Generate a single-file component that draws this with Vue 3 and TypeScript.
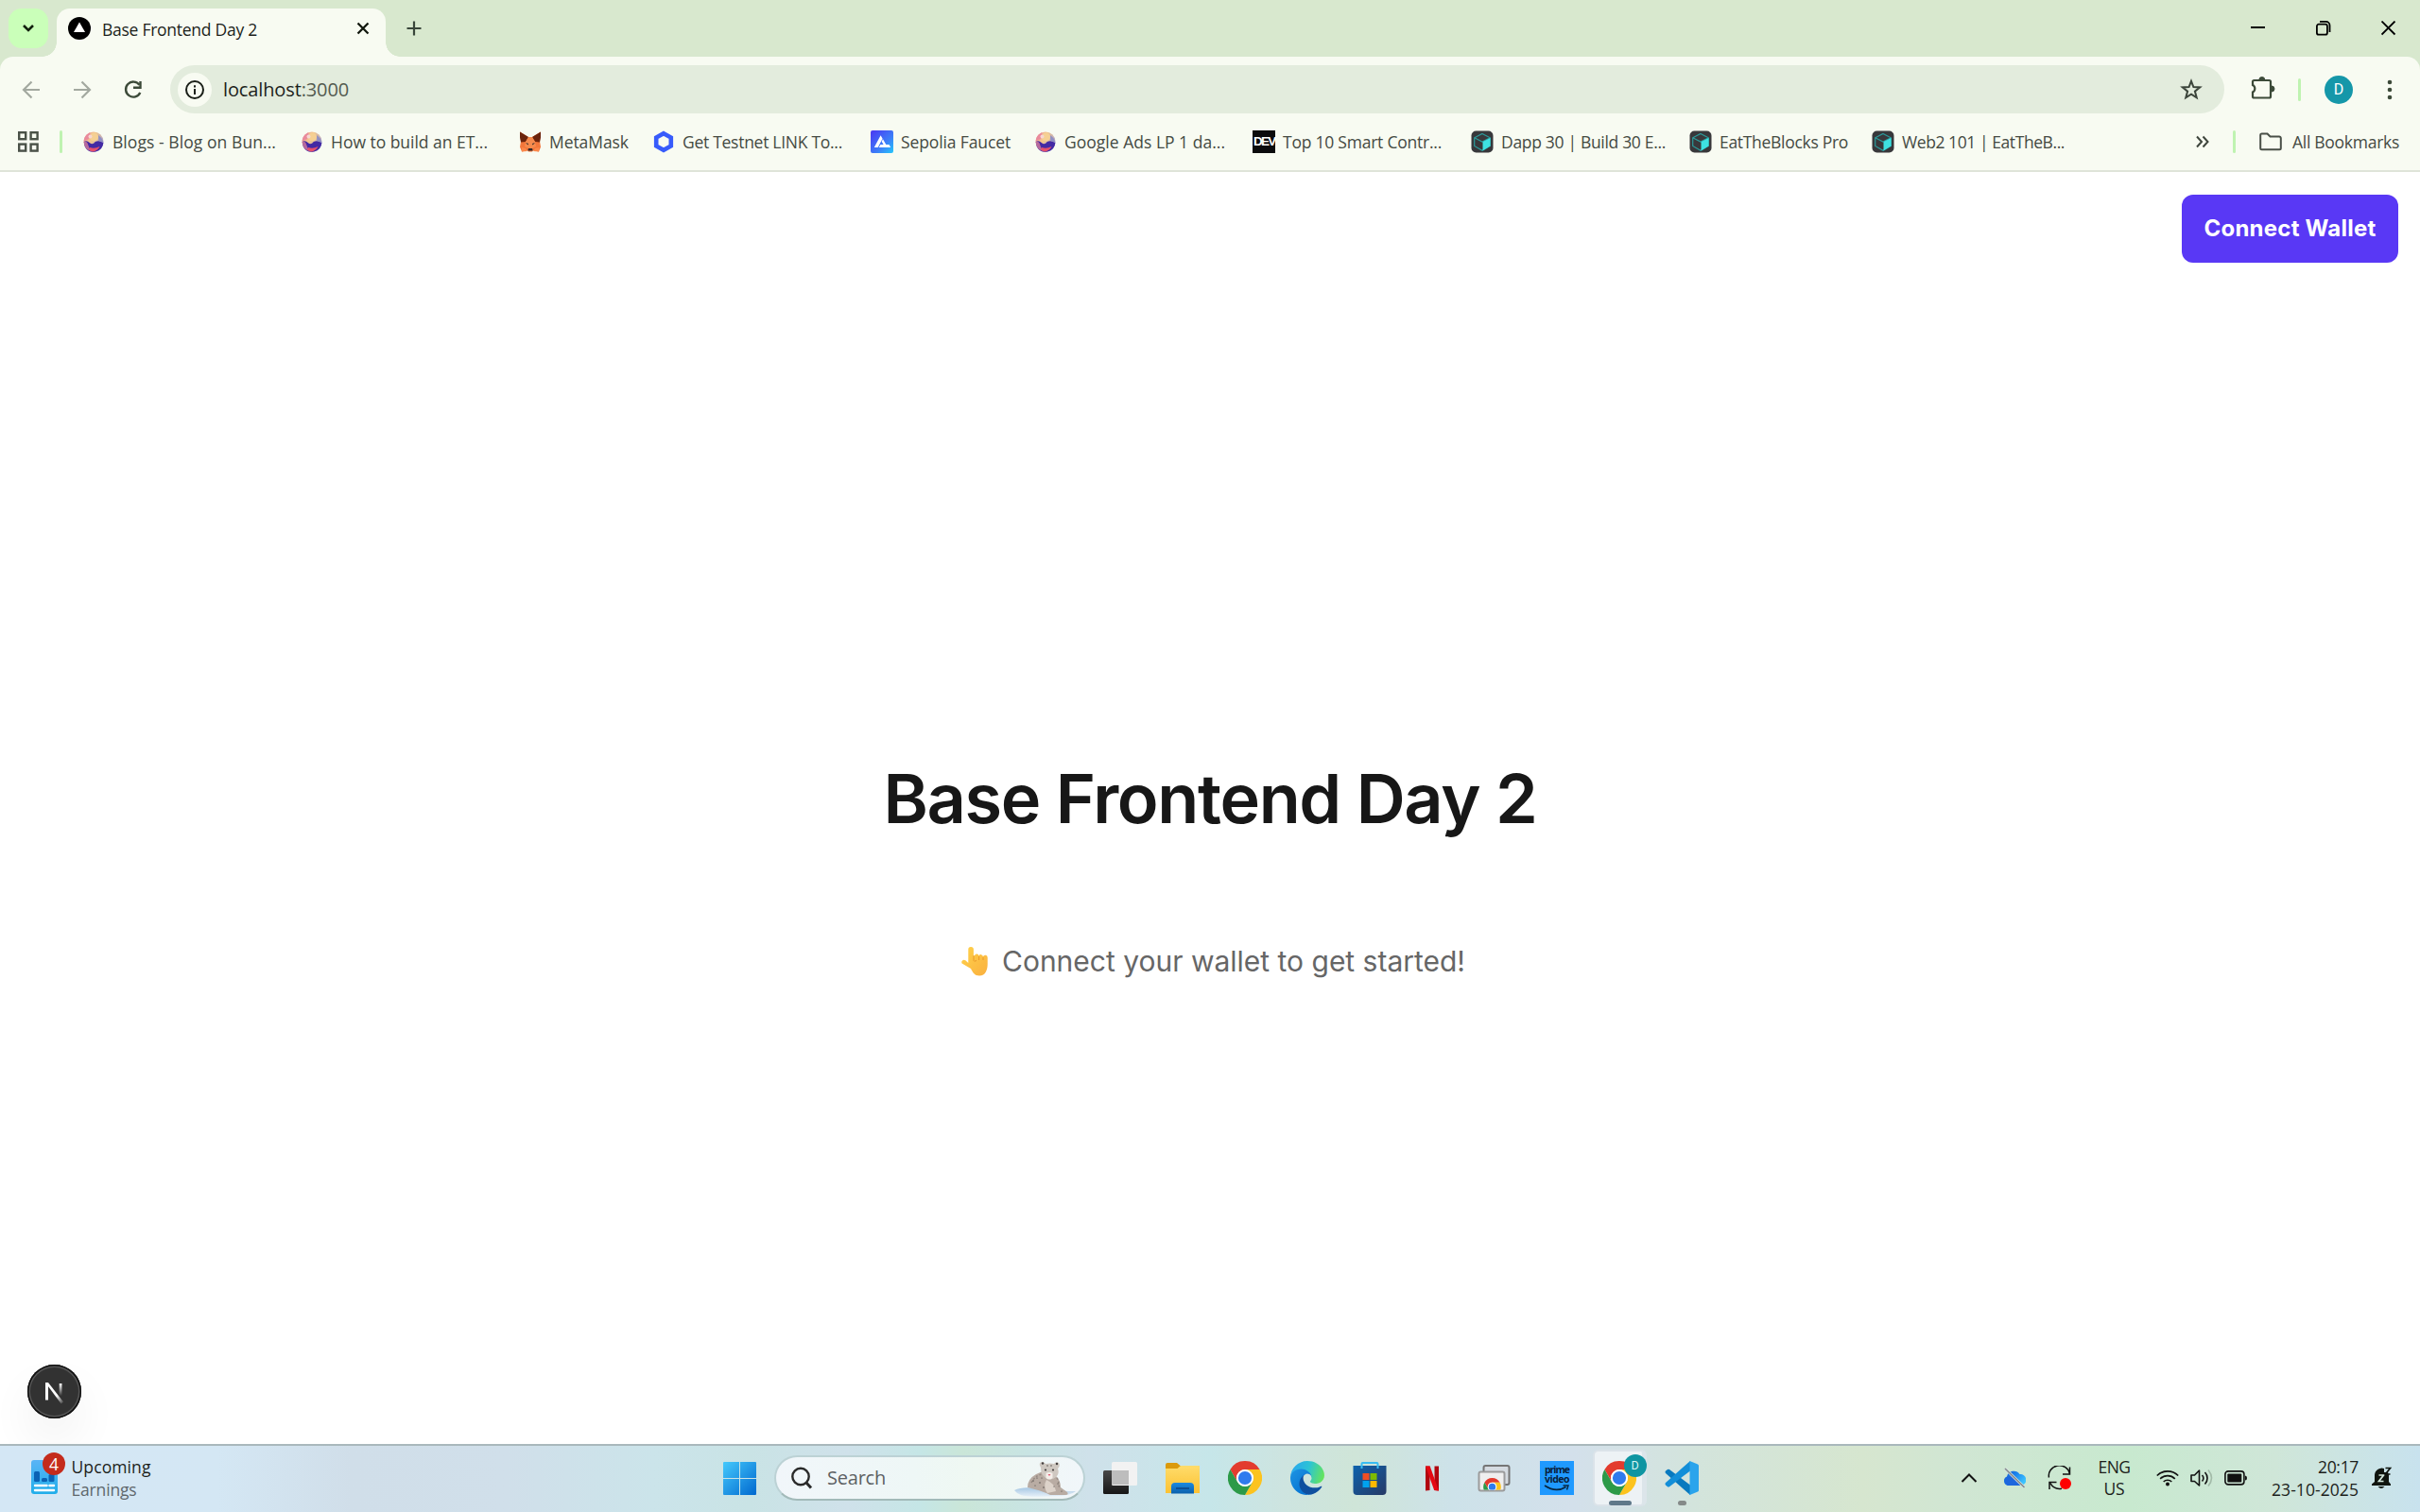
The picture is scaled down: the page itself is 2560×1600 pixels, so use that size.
<script setup lang="ts">
interface Bookmark {
  icon: string
  label: string
  width: number
}

const bookmarks: Bookmark[] = [
  { icon: 'orb', label: 'Blogs - Blog on Bun...', width: 173 },
  { icon: 'orb', label: 'How to build an ET...', width: 166 },
  { icon: 'fox', label: 'MetaMask', width: 84 },
  { icon: 'link', label: 'Get Testnet LINK To...', width: 169 },
  { icon: 'alchemy', label: 'Sepolia Faucet', width: 116 },
  { icon: 'orb', label: 'Google Ads LP 1 da...', width: 170 },
  { icon: 'dev', label: 'Top 10 Smart Contr...', width: 168 },
  { icon: 'block', label: 'Dapp 30 | Build 30 E...', width: 174 },
  { icon: 'block', label: 'EatTheBlocks Pro', width: 136 },
  { icon: 'block', label: 'Web2 101 | EatTheB...', width: 172 },
]

// Spreads or tightens the letters of a label so that it fills the given width.
const vFit = {
  mounted(el: HTMLElement, binding: { value: number }) {
    const natural = el.getBoundingClientRect().width
    const count = (el.textContent ?? '').length
    el.style.letterSpacing = `${(binding.value - natural) / count}px`
  },
}
</script>

<template>
  <div class="screen">
    <svg class="defs" width="0" height="0">
      <defs>
        <linearGradient id="orbTop" x1="0" y1="0" x2="1" y2="0.6"><stop offset="0" stop-color="#ee8fa0" /><stop offset="0.45" stop-color="#f3c78c" /><stop offset="1" stop-color="#a9a0cf" /></linearGradient>
        <linearGradient id="alch" x1="0" y1="0" x2="1" y2="1"><stop offset="0" stop-color="#4a36f2" /><stop offset="0.6" stop-color="#3d7df8" /><stop offset="1" stop-color="#25c8fb" /></linearGradient>
        <linearGradient id="win" x1="0" y1="0" x2="1" y2="1"><stop offset="0" stop-color="#45c9fc" /><stop offset="1" stop-color="#0068cf" /></linearGradient>
        <linearGradient id="edgeBlue" x1="0" y1="0.3" x2="0.6" y2="1"><stop offset="0" stop-color="#1a8fe0" /><stop offset="1" stop-color="#0572d2" /></linearGradient>
        <linearGradient id="edgeGreen" x1="0" y1="0.4" x2="1" y2="0.6"><stop offset="0" stop-color="#2aa7ee" /><stop offset="0.5" stop-color="#2cc3d5" /><stop offset="1" stop-color="#66e55a" /></linearGradient>
        <linearGradient id="folder" x1="0" y1="0" x2="0" y2="1"><stop offset="0" stop-color="#ffdc6b" /><stop offset="1" stop-color="#fcc233" /></linearGradient>
        <linearGradient id="folderTray" x1="0" y1="0" x2="0" y2="1"><stop offset="0" stop-color="#1c8ae0" /><stop offset="1" stop-color="#0b60ac" /></linearGradient>
        <linearGradient id="bag" x1="0" y1="0" x2="1" y2="1"><stop offset="0" stop-color="#0d62ad" /><stop offset="1" stop-color="#273a66" /></linearGradient>
        <linearGradient id="report" x1="0" y1="0" x2="0" y2="1"><stop offset="0" stop-color="#5ab4f6" /><stop offset="1" stop-color="#20aeea" /></linearGradient>
        <linearGradient id="hand" x1="0" y1="0" x2="1" y2="1"><stop offset="0" stop-color="#ffd24a" /><stop offset="1" stop-color="#fab03f" /></linearGradient>
        <linearGradient id="viewDark" x1="0" y1="0" x2="0" y2="1"><stop offset="0" stop-color="#484848" /><stop offset="1" stop-color="#161616" /></linearGradient>
        <linearGradient id="nFade" x1="0" y1="0" x2="0" y2="1"><stop offset="0" stop-color="#fff" /><stop offset="1" stop-color="#fff" stop-opacity="0" /></linearGradient>
        <linearGradient id="nDiag" gradientUnits="userSpaceOnUse" x1="19" y1="20" x2="38" y2="42"><stop offset="0.6" stop-color="#fff" /><stop offset="1" stop-color="#fff" stop-opacity="0" /></linearGradient>
        <linearGradient id="cloud" x1="0" y1="0" x2="1" y2="0.6"><stop offset="0" stop-color="#1555c9" /><stop offset="0.5" stop-color="#1b85ee" /><stop offset="1" stop-color="#3ec5ff" /></linearGradient>
        <linearGradient id="ice" x1="0" y1="0" x2="0" y2="1"><stop offset="0" stop-color="#a7c8e4" /><stop offset="1" stop-color="#e6f0f8" /></linearGradient>
      </defs>
      <symbol id="orb" viewBox="0 0 24 24">
        <circle cx="12" cy="12" r="10.500" fill="url(#orbTop)" />
        <circle cx="12.500" cy="7" r="4.500" fill="#f5d093" />
        <path d="M8 2.300q-6 3-6.400 9l5-2 2-4z" fill="#e98a9c" />
        <circle cx="8.500" cy="6.500" r="2" fill="#f6d7d2" />
        <path d="M1.800 12q3-2 6 1t6-1q4-2 8.600 1a10.500 10.500 0 0 1-19.500 4.500z" fill="#432aa4" />
        <path d="M1.600 12q3.500-1 4.500 3t4 7q-6-1-7.800-6.500z" fill="#b76a9d" />
        <path d="M8 18q5 2 10.500-1-2 4.500-7 5.400-3-.5-4.500-2z" fill="#e4506c" />
        <path d="M17 5q4.500 3 5.300 8l-5-2z" fill="#8f8fc4" />
      </symbol>
      <symbol id="fox" viewBox="0 0 24 24">
        <path d="M1 1.500 10 7h4l9-5.500-1 10 1 6-2 5-6-1.500-1 1.500h-4L9 21l-6 1.500-2-5 1-6z" fill="#f2763a" />
        <path d="M1 1.500 10 7 7 12l-5 .5-1-5zM23 1.500 14 7l3 5 5 .5 1-5z" fill="#6b240d" />
        <path d="m7 12 3-5h4l3 5 1 5-4 2h-4l-4-2z" fill="#f58a4d" />
        <path d="m7 13 3 1-.5 1.500zM17 13l-3 1 .5 1.500zM10 19h4l.7 2.500H9.300z" fill="#31282a" />
        <path d="m3 18 4 1 2 3-6 .5zM21 18l-4 1-2 3 6 .5z" fill="#fb884a" />
      </symbol>
      <symbol id="link" viewBox="0 0 24 24"><path d="m12 3.200 7.800 4.400v8.800L12 20.800l-7.800-4.400V7.600z" fill="none" stroke="#375bfb" stroke-width="4.600" /></symbol>
      <symbol id="alchemy" viewBox="0 0 24 24">
        <rect width="24" height="24" rx="2" fill="url(#alch)" />
        <path d="m10.600 5.300 2 3.500L7.700 18H3.800zM13 9.300l3.300 5.700h3.200l1.700 3H8.700l1.700-3h3.200l-1.900-3.200z" fill="#fff" />
      </symbol>
      <symbol id="block" viewBox="0 0 24 24">
        <rect x="0.500" y="0.500" width="23" height="23" rx="5" fill="#38383b" />
        <path d="m12 3.500 8.300 4.300v8.700L12 21.300l-8.300-4.800V7.800zM3.700 7.800 12 12l8.300-4.200" fill="none" stroke="#2b9c9c" stroke-width="1.200" />
        <path d="m12.500 12 8-4v8.500l-8 5z" fill="#3ee2e2" />
      </symbol>
      <symbol id="chrome" viewBox="0 0 36 36">
        <path d="M33.590 9A18 18 0 0 0 2.410 9L10.210 22.500A9 9 0 0 1 18 9Z" fill="#e33b2e" />
        <path d="M33.590 9A18 18 0 0 0 2.410 9L10.210 22.500A9 9 0 0 1 18 9Z" fill="#fcc31e" transform="rotate(120 18 18)" />
        <path d="M33.590 9A18 18 0 0 0 2.410 9L10.210 22.500A9 9 0 0 1 18 9Z" fill="#2c9a48" transform="rotate(240 18 18)" />
        <circle cx="18" cy="18" r="9" fill="#fff" />
        <circle cx="18" cy="18" r="7.100" fill="#2f7bee" />
      </symbol>
    </svg>

    <header class="tabstrip">
      <button class="tab-search">
        <svg width="14" height="10" viewBox="0 0 14 10"><path d="m2 2 5 5 5-5" fill="none" stroke="#12200e" stroke-width="2.600" /></svg>
      </button>
      <div class="tab">
        <svg width="24" height="24" viewBox="0 0 24 24"><circle cx="12" cy="12" r="12" /><path d="m12 5.500 6 10.500H6z" fill="#fff" /></svg>
        <span class="tab-title"><span v-fit="164">Base Frontend Day 2</span></span>
        <svg width="14" height="14" viewBox="0 0 14 14"><path d="m1.500 1.500 11 11m0-11-11 11" stroke="#12180f" stroke-width="2.300" /></svg>
      </div>
      <svg class="plus" width="16" height="16" viewBox="0 0 16 16"><path d="M8 .5v15M.5 8h15" stroke="#39463a" stroke-width="2.200" /></svg>
      <div class="window-controls">
        <svg width="16" height="16" viewBox="0 0 16 16"><path d="M0 7h15" stroke="#000" stroke-width="2" /></svg>
        <svg width="16" height="16" viewBox="0 0 16 16" fill="none" stroke="#000" stroke-width="1.800"><rect x="0.900" y="3.700" width="11" height="11" rx="2" /><path d="M4 .9h6.500a4 4 0 0 1 4 4V12" /></svg>
        <svg width="16" height="16" viewBox="0 0 16 16"><path d="m.5.500 14 14m0-14-14 14" stroke="#000" stroke-width="1.800" /></svg>
      </div>
    </header>

    <div class="toolbar-backdrop">
      <div class="toolbar">
        <div class="nav">
          <svg width="54" height="24" viewBox="0 0 54 24" fill="none" stroke="#a3a9a0" stroke-width="2.200"><path d="M36 12H19.500M27.500 3.500 19 12l8.500 8.500" /></svg>
          <svg width="54" height="24" viewBox="0 0 54 24" fill="none" stroke="#a3a9a0" stroke-width="2.200"><path d="M18 12h16.500M26.500 3.500 35 12l-8.500 8.500" /></svg>
          <svg width="54" height="24" viewBox="0 0 54 24" fill="none" stroke="#3c4a39" stroke-width="2.400"><path d="M33.500 6.800A8 8 0 1 0 34.300 15" /><path d="M34.500 3v6.800h-7.500" /></svg>
        </div>
        <div class="omnibox">
          <span class="site-info">
            <svg width="20" height="20" viewBox="0 0 20 20"><circle cx="10" cy="10" r="9" fill="none" stroke="#1a1f18" stroke-width="2" /><path d="M10 9v6M10 5.200v2.200" stroke="#1a1f18" stroke-width="2" /></svg>
          </span>
          <span class="url"><span v-fit="133">localhost<i>:3000</i></span></span>
          <svg class="star" width="24" height="24" viewBox="0 0 24 24"><path d="m12 2.800 2.400 6.200 6.800.4-5.300 4.200 1.800 6.700-5.700-3.700-5.700 3.700 1.800-6.700-5.300-4.200 6.800-.4z" fill="none" stroke="#3c453b" stroke-width="2" /></svg>
        </div>
        <svg class="puzzle" width="26" height="26" viewBox="0 0 26 26"><path d="M3.500 5h16a1.500 1.500 0 0 1 1.500 1.500v15.500a1.500 1.500 0 0 1-1.500 1.500h-16a1.500 1.500 0 0 1-1.500-1.500v-4.500a4.200 4.200 0 0 0 0-7.500V6.500A1.500 1.500 0 0 1 3.500 5z" fill="none" stroke="#3c4a39" stroke-width="2.200" /><path d="M8.800 4.500a3 3 0 0 1 6 0zM22 11a3 3 0 0 1 0 6z" fill="#3c4a39" stroke="#3c4a39" /></svg>
        <i class="divider d1"></i>
        <span class="avatar">D</span>
        <svg class="dots" width="6" height="24" viewBox="0 0 6 24" fill="#3c4a39"><circle cx="3" cy="4" r="2.300" /><circle cx="3" cy="12" r="2.300" /><circle cx="3" cy="20" r="2.300" /></svg>
      </div>

      <div class="bookmarks">
        <svg class="grid-icon" width="22" height="22" viewBox="0 0 22 22" fill="none" stroke="#4a5148" stroke-width="2.400"><rect x="1.200" y="1.200" width="7" height="7" /><rect x="13.600" y="1.200" width="7" height="7" /><rect x="1.200" y="13.600" width="7" height="7" /><rect x="13.600" y="13.600" width="7" height="7" /></svg>
        <i class="divider d2"></i>
        <div class="bookmark-list">
          <div v-for="b in bookmarks" :key="b.label" class="bookmark">
            <b v-if="b.icon === 'dev'" class="dev"><span v-fit="22.5">DEV</span></b>
            <svg v-else width="24" height="24"><use :href="'#' + b.icon" /></svg>
            <span v-fit="b.width" class="bookmark-label">{{ b.label }}</span>
          </div>
        </div>
        <div class="bookmarks-end">
          <svg width="14" height="14" viewBox="0 0 14 14"><path d="m1 1.500 5 5.500-5 5.500M7.500 1.500l5 5.500-5 5.500" fill="none" stroke="#3f463d" stroke-width="2" /></svg>
          <i class="divider d3"></i>
          <svg width="24" height="20" viewBox="0 0 24 20"><path d="M3 1.500h5.500L11.500 4.500H21a1.800 1.800 0 0 1 1.800 1.800v10.500a1.500 1.500 0 0 1-1.500 1.500H2.700a1.500 1.500 0 0 1-1.500-1.500V3A1.500 1.500 0 0 1 3 1.500z" fill="none" stroke="#494f47" stroke-width="2" /></svg>
          <span class="all"><span v-fit="113">All Bookmarks</span></span>
        </div>
      </div>
    </div>

    <main class="page">
      <button class="connect"><span v-fit="182">Connect Wallet</span></button>
      <section class="hero">
        <h1><span v-fit="691">Base Frontend Day 2</span></h1>
        <p>
          <svg width="30" height="31" viewBox="0 0 30 31">
            <path d="M8.300 3a2.800 2.800 0 0 1 5.600-.3V10l1.300-1.200a2.300 2.300 0 0 1 4.300.7 2.300 2.300 0 0 1 4.400.8 2.500 2.500 0 0 1 4.800 1V18c0 6-2 12.500-8.700 12.500-5 0-7-3.500-9-7.500L1.600 17.500C.3 15 3 12.500 5.300 14.200L8.300 17z" fill="url(#hand)" />
            <path d="M14 9v5.500q0 1.500 3 0M19.600 10v4M24 11v3" fill="none" stroke="#e99a2b" stroke-width="1" />
          </svg>
          <span v-fit="490">Connect your wallet to get started!</span>
        </p>
      </section>
      <button class="next-badge">
        <svg width="57" height="57" viewBox="0 0 57 57"><path d="M19 19h3v18.500h-3z" fill="#fff" /><path d="M33.700 20h2.800v13h-2.800z" fill="url(#nFade)" /><path d="m19 19h3l16 20.500-2.300 2z" fill="url(#nDiag)" /></svg>
      </button>
    </main>

    <footer class="taskbar">
      <div class="widget">
        <div class="widget-icon">
          <svg width="28" height="36" viewBox="0 0 28 36"><rect width="28" height="36" rx="3" fill="url(#report)" /><rect x="3" y="12" width="6" height="11" rx="1.500" fill="#0a62b4" /><rect x="11" y="19" width="6" height="4" rx="1.500" fill="#0a62b4" /><rect x="18.500" y="15" width="6" height="8" rx="1.500" fill="#0a62b4" /><path d="M4 27h12.500M19.500 27H24M4 32h20" stroke="#fff" stroke-width="2.400" stroke-linecap="round" /></svg>
          <b>4</b>
        </div>
        <div class="widget-text">
          <div><span v-fit="84">Upcoming</span></div>
          <div class="muted"><span v-fit="69">Earnings</span></div>
        </div>
      </div>

      <nav class="apps">
        <div class="slot"><svg width="35" height="35" viewBox="0 0 35 35"><path d="M1 0h16v17H0V1a1 1 0 0 1 1-1zM18 0h16a1 1 0 0 1 1 1v16H18zM0 18h17v17H1a1 1 0 0 1-1-1zM18 18h17v16a1 1 0 0 1-1 1H18z" fill="url(#win)" /></svg></div>
        <div class="search">
          <svg width="24" height="24" viewBox="0 0 24 24" fill="none" stroke="#2a2a2a"><circle cx="11" cy="10.500" r="8.700" stroke-width="2.400" /><path d="m16.500 16.500 5.500 6" stroke-width="3" /></svg>
          <span class="search-label"><span v-fit="62">Search</span></span>
          <svg class="leopard" width="66" height="38" viewBox="0 0 66 38">
            <path d="M0 31q10-5 30-1 20 2 35 2-6 5-20 5-30 2-38-1-5-2-7-5z" fill="url(#ice)" />
            <path d="M14 28q0-9 9-14l7-3 13 4q6 5 6 13l7 5q2 3-2 3H38q-10-5-24-8z" fill="#b9aca3" />
            <path d="M34 20q9 4 10 12l-9 2q-5-7-1-14z" fill="#ddd3ca" />
            <path d="M28 7q-3-5 1-6 3 0 4 2 5-1 9 0 2-3 5-1 2 3-1 6 2 6-2 9-6 5-12 0-4-3-4-10z" fill="#cfc8c1" />
            <path d="M33.500 13q3.500-2 7 0v5q-3.500 3-7 0z" fill="#f4eee9" /><path d="M35.500 14h3l-1.500 2z" fill="#e0576f" />
            <path d="M18 23q4-8 12-9M45 18q3 5 2 11" fill="none" stroke="#968a83" stroke-width="1.500" stroke-dasharray="2 2" />
            <g fill="#45403f"><circle cx="33" cy="9.500" r="1.100" /><circle cx="41" cy="9.500" r="1.100" /><circle cx="35" cy="5" r=".7" /><circle cx="39" cy="5" r=".7" /><circle cx="30" cy="2.500" r="1.200" /><circle cx="45" cy="3" r="1.200" /><circle cx="20" cy="21" r=".7" /><circle cx="24" cy="18" r=".6" /><circle cx="27" cy="23" r=".7" /><circle cx="22" cy="26" r=".6" /><circle cx="46" cy="24" r=".6" /><circle cx="31" cy="28" r=".7" /><circle cx="42" cy="27" r=".6" /><circle cx="50" cy="32" r=".6" /><circle cx="29" cy="18" r=".6" /></g>
          </svg>
        </div>
        <div class="slot"><svg width="36" height="36" viewBox="0 0 36 36"><rect y="10" width="27" height="25" rx="1.500" fill="url(#viewDark)" /><rect x="9" y="1" width="27" height="25" rx="1.500" fill="#f2f2f2" /><path d="M9 10h18v15H10a1 1 0 0 1-1-1z" fill="#bdbdbd" /></svg></div>
        <div class="slot"><svg width="36" height="36" viewBox="0 0 36 36"><path d="M0 4a2 2 0 0 1 2-2h10l3.500 3H34a2 2 0 0 1 2 2v4H0z" fill="#db9a0c" /><path d="M0 8h12.500L16 5h19a1 1 0 0 1 1 1v28H0z" fill="url(#folder)" /><path d="M6 34.500V27a4 4 0 0 1 4-4h16a4 4 0 0 1 4 4v7.500z" fill="url(#folderTray)" /><path d="M11 29h14" stroke="#0d4f94" stroke-width="2" /></svg></div>
        <div class="slot"><svg width="36" height="36"><use href="#chrome" /></svg></div>
        <div class="slot"><svg width="36" height="36" viewBox="0 0 256 256"><path d="M231 190.500c-3.400 1.800-6.900 3.400-10.500 4.700a101.700 101.700 0 0 1-35.800 6.400c-47.200 0-88.300-32.400-88.300-74.200.1-11.400 6.400-21.900 16.400-27.300-42.700 1.800-53.700 46.300-53.700 72.300 0 73.700 67.900 81.100 82.500 81.100 7.900 0 19.800-2.300 27-4.600l1.300-.4c27.600-9.500 51-28.100 66.600-52.800 1.200-1.900.6-4.300-1.200-5.500-1.300-.8-2.900-.9-4.300.3z" fill="#0f4f9f" /><path d="M105.700 241.400c-8.900-5.500-16.600-12.800-22.700-21.300-26.300-36-18.400-86.500 17.600-112.800 3.800-2.700 7.700-5.200 11.900-7.200 3.100-1.500 8.400-4.100 15.500-4 10.100.1 19.600 4.900 25.700 13 4 5.400 6.300 11.900 6.400 18.700 0-.2 24.500-79.600-80-79.600-43.900 0-80 41.700-80 78.200-.2 19.300 4 38.500 12.100 56 27.600 58.800 94.800 87.600 156.400 67.100-21.100 6.600-44.100 3.700-62.900-8.100z" fill="url(#edgeBlue)" /><path d="M152.300 148.900c-.9 1-3.400 2.500-3.400 5.600 0 2.600 1.700 5.100 4.700 7.200 14.400 10 41.500 8.700 41.600 8.700 10.700 0 21.100-2.900 30.300-8.300 18.800-11 30.400-31.100 30.400-52.900.3-22.400-8-37.300-11.300-43.900C223.500 23.900 177.700 0 128 0 58 0 1 56.200 0 126.200c.5-36.500 36.800-66 80-66 3.500 0 23.500.3 42 10.100 16.300 8.600 24.900 18.900 30.800 29.200 6.200 10.700 7.300 24.100 7.300 29.500 0 5.300-2.700 13.300-7.800 19.900z" fill="url(#edgeGreen)" /></svg></div>
        <div class="slot"><svg width="36" height="36" viewBox="0 0 36 36"><path d="M.5 5h35v27a4 4 0 0 1-4 4h-27a4 4 0 0 1-4-4z" fill="url(#bag)" /><path d="M9.500 8V3q0-1 1-1h15q1 0 1 1v5" fill="none" stroke="#37bdf2" stroke-width="2" /><path d="M10.500 13h7v7h-7z" fill="#f04e24" /><path d="M18.500 13h7v7h-7z" fill="#7eba00" /><path d="M10.500 21h7v7h-7z" fill="#00a2ee" /><path d="M18.500 21h7v7h-7z" fill="#ffb801" /></svg></div>
        <div class="slot"><svg width="36" height="36" viewBox="0 0 36 36"><path d="M11 5.500h4.500V31l-4.500.5zM20.500 5.500H25v26l-4.500-.5z" fill="#b1060f" /><path d="M11 5.500h4.700L25 31.500l-4.800-.5z" fill="#e50914" /></svg></div>
        <div class="slot"><svg width="36" height="36" viewBox="0 0 36 36"><rect x="6.500" y="5" width="27" height="20" rx="2" fill="#d5dbe1" stroke="#757575" stroke-width="2" /><rect x="1.500" y="11.500" width="27" height="20" rx="2" fill="#efefef" stroke="#9b9b9b" stroke-width="2" /><svg x="6" y="18" width="19" height="12.500" viewBox="0 0 36 24"><use href="#chrome" width="36" height="36" /></svg></svg></div>
        <div class="slot"><div class="prime"><span v-fit="26">prime</span><span v-fit="26">video</span><svg width="28" height="7" viewBox="0 0 28 7"><path d="M1 1q12 8 22.500 1.500" fill="none" stroke="#08263e" stroke-width="1.600" /><path d="M20.500 1h5.500l-1.500 4.500" fill="none" stroke="#08263e" stroke-width="1.400" /></svg></div></div>
        <div class="slot"><div class="active-app"><svg width="36" height="36"><use href="#chrome" /></svg><b>D</b><i></i></div></div>
        <div class="slot vscode"><svg width="36" height="36" viewBox="0 0 36 36"><path d="M1 10.500 3 9q1-.7 2 0l22 16.500V36L1 13q-1-1.200 0-2.500z" fill="#0879bf" /><path d="m1 25.500 2 1.700q1 .7 2 0L27 10.500V0L1 23q-1 1.200 0 2.500z" fill="#128ed8" /><path d="M26.500 0 35 3.500q1 .5 1 1.500v26q0 1-1 1.500L26.500 36q-1 0 0-1.500z" fill="#2ba4ec" /></svg><i></i></div>
      </nav>

      <div class="tray">
        <div class="w48"><svg width="18" height="12" viewBox="0 0 18 12"><path d="m1.500 10 7.500-7.500 7.500 7.500" fill="none" stroke="#111" stroke-width="2" /></svg></div>
        <div class="w48"><svg width="24" height="24" viewBox="0 0 24 24"><path d="M5 20a5 5 0 0 1-1-9.500A7.500 7.500 0 0 1 17.500 8a6 6 0 0 1 1.500 12z" fill="url(#cloud)" /><path d="M5 10.500q5-1 8.500 3.500l5 6H5a5 5 0 0 1 0-9.500z" fill="#1d67dd" /><path d="m2 2 20.500 20" stroke="#dce4e6" stroke-width="3" /><path d="m2 2 20.500 20" stroke="#82898b" stroke-width="1.600" /></svg></div>
        <div class="w48"><svg width="26" height="26" viewBox="0 0 26 26" fill="none" stroke="#111" stroke-width="1.500"><path d="M1.500 12.500A11 10.500 0 0 1 23.500 8.500M23.500 1.500v7.500h-7.500M15 24.200q-8 1.500-12-5.500M2 25v-7.500h7.500" /><circle cx="19" cy="19" r="6" fill="#fe0000" stroke="none" /></svg></div>
        <div class="lang"><span><span v-fit="34">ENG</span></span><span><span v-fit="22">US</span></span></div>
        <div class="w36"><svg width="24" height="18" viewBox="0 0 24 18" fill="none" stroke="#111" stroke-width="1.700"><path d="M.8 6.500a16 16 0 0 1 22.400 0M4.200 9.800a11.200 11.200 0 0 1 15.600 0M7.700 13a6.200 6.200 0 0 1 8.600 0" /><circle cx="12" cy="15.500" r="2" fill="#111" stroke="none" /></svg></div>
        <div class="w36"><svg width="24" height="20" viewBox="0 0 24 20" fill="none" stroke="#111" stroke-width="1.600"><path d="M1 7h3.500L9.500 2v16L4.500 13.500H1z" stroke-linejoin="round" /><path d="M12.500 7a4.500 4.500 0 0 1 0 6.500M15.500 4a9 9 0 0 1 0 12.500" /><path d="M19 1.500q7 8.500 0 17" stroke="#a3bba9" /></svg></div>
        <div class="w36"><svg width="24" height="16" viewBox="0 0 24 16"><rect x="0.900" y="0.900" width="20" height="14" rx="3.200" fill="none" stroke="#111" stroke-width="1.600" /><rect x="3.300" y="3.500" width="15" height="9" rx="1" fill="#111" /><path d="M22 5.500q2 0 2 2.500t-2 2.500z" fill="#111" /></svg></div>
        <div class="clock"><span><span v-fit="43">20:17</span></span><span><span v-fit="92">23-10-2025</span></span></div>
        <svg class="bell" width="22" height="26" viewBox="0 0 22 26">
          <path d="M3 17V10a7.500 7.500 0 0 1 10-7v4h4l1 3v7l2 2.500v1.500H0v-1.500zM6.500 22h7q-3.500 4-7 0z" fill="#10150f" />
          <path d="M7.500 10h5l-5 6.500h5" fill="none" stroke="#d6ebe0" stroke-width="1.700" />
          <path d="M14.500 2.500h5l-5 6.500h5" fill="none" stroke="#10150f" stroke-width="1.700" />
        </svg>
      </div>
    </footer>
  </div>
</template>

<style>
html,
body {
  margin: 0;
  background: #fff;
}
</style>

<style scoped>
.screen {
  width: 2560px;
  height: 1600px;
  overflow: hidden;
  display: flex;
  flex-direction: column;
  font-family: 'Open Sans', 'Noto Sans', sans-serif;
  font-size: 17.5px;
  color: #1c1f1b;
  white-space: nowrap;
}
.screen * {
  box-sizing: border-box;
}
svg {
  flex: none;
  display: block;
}
.defs {
  position: absolute;
}
button {
  border: 0;
  padding: 0;
  font: inherit;
}

/* tab strip */
.tabstrip {
  height: 60px;
  flex: none;
  background: #d8e8ce;
  display: flex;
  align-items: flex-start;
}
.tab-search {
  width: 42px;
  height: 42px;
  margin: 9px 9px 0;
  border-radius: 14px;
  background: #caffb9;
  display: flex;
  align-items: center;
  justify-content: center;
}
.tab {
  position: relative;
  width: 348px;
  height: 51px;
  margin-top: 9px;
  padding: 0 17px 9px 12px;
  border-radius: 14px 14px 0 0;
  background: #f8fbf2;
  display: flex;
  align-items: center;
}
.tab::before,
.tab::after {
  content: '';
  position: absolute;
  bottom: 0;
  width: 15px;
  height: 15px;
}
.tab::before {
  left: -15px;
  background: radial-gradient(circle at 0 0, transparent 14.5px, #f8fbf2 15px);
}
.tab::after {
  right: -15px;
  background: radial-gradient(circle at 100% 0, transparent 14.5px, #f8fbf2 15px);
}
.tab-title {
  flex: 1;
  padding: 1px 0 0 12px;
}
.plus {
  margin: 22px 0 0 22px;
}
.window-controls {
  margin: 22px 25px 0 auto;
  display: flex;
  gap: 53px;
}

/* toolbar */
.toolbar-backdrop {
  flex: none;
  height: 122px;
  background: #d8e8ce;
}
.toolbar {
  height: 60px;
  padding-top: 9px;
  background: #f8fbf2;
  border-radius: 14px 14px 0 0;
  display: flex;
  align-items: center;
}
.nav {
  width: 180px;
  padding-left: 6px;
  display: flex;
}
.omnibox {
  width: 2173px;
  height: 51px;
  padding: 0 23px 0 8px;
  border-radius: 26px;
  background: #e3ecdd;
  display: flex;
  align-items: center;
}
.site-info {
  width: 36px;
  height: 36px;
  border-radius: 50%;
  background: #f8fbf2;
  display: flex;
  align-items: center;
  justify-content: center;
}
.url {
  margin-left: 12px;
  flex: 1;
  font-size: 20px;
  line-height: 24px;
}
.url i {
  font-style: normal;
  color: #535b50;
}
.puzzle {
  margin: 0 0 3px 28px;
}
.divider {
  flex: none;
  width: 3px;
  height: 24px;
  border-radius: 2px;
  background: #bff3b1;
}
.d1 {
  margin-left: 24px;
}
.avatar {
  width: 30px;
  height: 30px;
  margin-left: 25px;
  border-radius: 50%;
  background: #1597a9;
  color: #fff;
  font: 16px/30px Roboto, sans-serif;
  text-align: center;
}
.dots {
  margin-left: 36px;
}

/* bookmarks bar */
.bookmarks {
  height: 62px;
  padding-right: 22px;
  background: #f8fbf2;
  border-bottom: 2px solid #dfe4d9;
  display: flex;
  align-items: center;
  color: #454a43;
}
.grid-icon {
  margin-left: 19px;
}
.d2 {
  margin: 0 21px 0 22px;
}
.bookmark-list {
  display: grid;
  grid-template-columns: 231px 231px 141px 231px 173px 231px 231px 231px 193px 220px;
}
.bookmark {
  display: flex;
  align-items: center;
  gap: 8px;
  line-height: 24px;
}
.bookmark-label {
  margin-top: -1px;
}
.dev {
  width: 24px;
  height: 24px;
  padding-left: 1px;
  background: #0b0b0d;
  color: #fff;
  font: 700 13.500px/24px 'Liberation Sans', sans-serif;
}
.bookmarks-end {
  margin-left: auto;
  display: flex;
  align-items: center;
}
.d3 {
  margin: 0 25px;
}
.all {
  margin: -1px 0 0 11px;
  line-height: 24px;
}

/* page */
.page {
  position: relative;
  flex: 1;
  background: #fff;
  display: flex;
  flex-direction: column;
}
.connect {
  align-self: flex-end;
  width: 229px;
  height: 72px;
  margin: 24px 23px 0 0;
  border-radius: 12px;
  background: #5938f5;
  color: #fff;
  font: 700 24px/72px Inter, sans-serif;
}
.hero {
  display: flex;
  flex-direction: column;
  align-items: center;
  font-family: Inter, sans-serif;
}
h1 {
  margin: 522px 0 0;
  font-size: 72px;
  font-weight: 600;
  line-height: 90px;
  color: #171717;
}
.hero p {
  margin: 105px 0 0 6px;
  display: flex;
  align-items: center;
  gap: 14px;
  font-size: 30px;
  line-height: 45px;
  color: #666;
}
.next-badge {
  position: absolute;
  left: 28.5px;
  bottom: 27.5px;
  width: 57px;
  height: 57px;
  border-radius: 50%;
  background: #323232;
  box-shadow: inset 0 0 0 1.5px #111, inset 0 0 0 3px #555, 0 24px 48px rgba(0, 0, 0, 0.06);
}

/* taskbar */
.taskbar {
  position: relative;
  flex: none;
  height: 72px;
  border-top: 2px solid #a9b8bc;
  background: linear-gradient(90deg, #d4e7f5 0, #d4e7f4 9%, #d0dee9 14.500%, #d0dfea 21%, #cbe4ea 27%, #c9e3e5 31%, #cfe1ea 35%, #c5e6e6 38%, #cae6d8 39.800%, #c8e4e3 42.500%, #cfe1ea 45%, #c6e6e9 50%, #cde4e0 53%, #cfe5d8 56%, #cde2e9 60%, #d3e0eb 65%, #d3e4dc 70%, #d6e6cf 77%, #d0e6d3 81%, #c8e9cf 88%, #cfe6d8 94%, #c8e2ee 100%);
  display: flex;
}
.widget {
  width: 749px;
  padding: 15px 0 0 33px;
  display: flex;
}
.widget-icon {
  position: relative;
  width: 28px;
  height: 36px;
}
.widget-icon b {
  position: absolute;
  left: 12px;
  top: -8px;
  width: 24px;
  height: 24px;
  border-radius: 50%;
  background: #c42b1c;
  color: #fff;
  font-weight: 400;
  line-height: 24px;
  text-align: center;
}
.widget-text {
  margin: -5px 0 0 14.5px;
  line-height: 24px;
}
.muted {
  color: #5f676c;
}
.apps {
  display: flex;
}
.slot {
  position: relative;
  width: 66px;
  height: 68px;
  display: flex;
  align-items: center;
  justify-content: center;
}
.search {
  width: 329px;
  height: 48px;
  margin: 10px 4px 0;
  padding: 0 7px 0 15px;
  border: 2px solid #bcd2d5;
  border-bottom-color: #a2bab9;
  border-radius: 24px;
  background: linear-gradient(90deg, #f1f6fa, #eef7f6 45%, #eff8f2 65%, #f1f6fa);
  display: flex;
  align-items: center;
}
.search-label {
  flex: 1;
  margin-left: 15px;
  font-size: 20px;
  line-height: 26px;
  color: #5d6163;
}
.leopard {
  margin-top: 2px;
}
.prime {
  width: 36px;
  height: 36px;
  padding-top: 4px;
  background: #1f99ff;
  color: #08203a;
  font: 700 10.500px/10px 'Open Sans', sans-serif;
  display: flex;
  flex-direction: column;
  align-items: center;
}
.prime svg {
  margin-top: 1px;
}
.active-app {
  position: relative;
  width: 57px;
  height: 60px;
  padding-left: 3px;
  border: 2px solid #dbe3e9;
  border-right: 5px solid #dce5ea;
  border-radius: 6px;
  background: #edf2f5;
  display: flex;
  align-items: center;
  justify-content: center;
}
.active-app b {
  position: absolute;
  right: -5px;
  top: 3px;
  width: 24px;
  height: 24px;
  border-radius: 50%;
  background: #0f95a2;
  color: #d6f3f3;
  font: 12.500px/24px Roboto, sans-serif;
  text-align: center;
}
.active-app i {
  position: absolute;
  bottom: -1px;
  left: 15px;
  width: 24px;
  height: 5px;
  border-radius: 3px;
  background: #5f7889;
}
.vscode i {
  position: absolute;
  bottom: 5px;
  left: 29px;
  width: 9px;
  height: 5px;
  border-radius: 3px;
  background: #858a89;
}
.tray {
  margin-left: auto;
  height: 68px;
  padding-right: 29px;
  display: flex;
  align-items: center;
}
.w48,
.w36 {
  display: flex;
  justify-content: center;
}
.w48 {
  width: 48px;
}
.w36 {
  width: 36px;
}
.lang {
  width: 72px;
  padding-right: 5px;
  display: flex;
  flex-direction: column;
  align-items: center;
  line-height: 23.500px;
}
.clock {
  width: 112px;
  display: flex;
  flex-direction: column;
  align-items: flex-end;
  line-height: 24px;
  margin-top: -1px;
}
.bell {
  margin-left: 14px;
}
</style>
